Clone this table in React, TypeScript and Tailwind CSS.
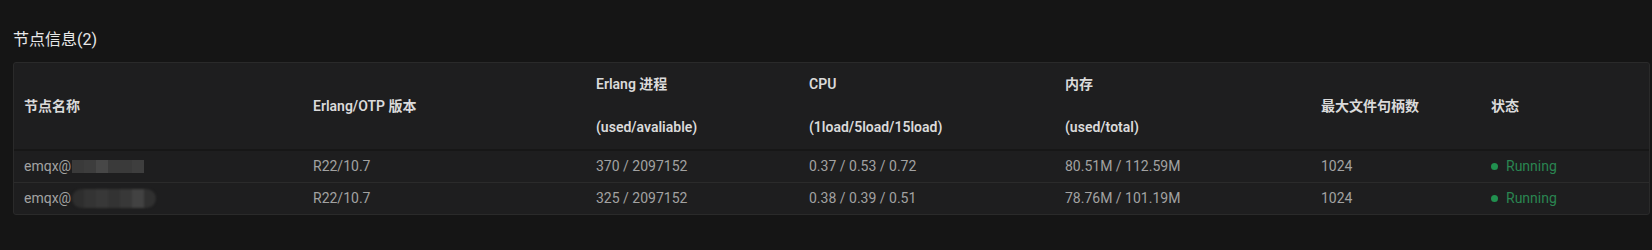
import React from "react"

type Node = {
	host: number[]
	round: boolean
	version: string
	procs: string
	cpu: string
	mem: string
	maxFds: string
}

const nodes: Node[] = [
	{
		host: [0x3a, 0x3d, 0x47, 0x3a, 0x3a, 0x3e],
		round: false,
		version: "R22/10.7",
		procs: "370 / 2097152",
		cpu: "0.37 / 0.53 / 0.72",
		mem: "80.51M / 112.59M",
		maxFds: "1024",
	},
	{
		host: [0x2e, 0x34, 0x38, 0x33, 0x38, 0x42, 0x30],
		round: true,
		version: "R22/10.7",
		procs: "325 / 2097152",
		cpu: "0.38 / 0.39 / 0.51",
		mem: "78.76M / 101.19M",
		maxFds: "1024",
	},
]

const cols = "grid grid-cols-[289px_283px_213px_256px_256px_170px_1fr]"

function Masked({ host, round }: { host: number[]; round: boolean }) {
	return (
		<span
			className={
				round
					? "ml-[1px] inline-flex h-[19px] overflow-hidden rounded-full blur-[1px]"
					: "ml-[1px] inline-flex h-[13px] overflow-hidden"
			}
		>
			{host.map((g, i) => (
				<span
					key={i}
					className="h-full w-[12px]"
					style={{ backgroundColor: `rgb(${g},${g},${g})` }}
				/>
			))}
		</span>
	)
}

function HeadCell({ top, bottom }: { top: string; bottom?: string }) {
	return (
		<div className="flex flex-col justify-center pl-[10px] font-semibold text-[14px] text-[#dadada]">
			<span className="leading-[43px]">{top}</span>
			{bottom && <span className="leading-[43px]">{bottom}</span>}
		</div>
	)
}

export default function App() {
	return (
		<div
			className="min-h-[250px] bg-[#151515] pt-[28px] pb-[35px]"
			style={{ fontFamily: "Roboto, 'Noto Sans CJK SC', sans-serif" }}
		>
			<h2 className="ml-[13px] text-[16px] leading-[24px] text-[#e8e8e8]">节点信息(2)</h2>
			<div className="mt-[10px] ml-[13px] mr-[2px] rounded-[3px] border border-[#2a2a2a] bg-[#1e1e1f]">
				<div className={`${cols} h-[88px] border-b-2 border-[#171717]`}>
					<HeadCell top="节点名称" />
					<HeadCell top="Erlang/OTP 版本" />
					<HeadCell top="Erlang 进程" bottom="(used/avaliable)" />
					<HeadCell top="CPU" bottom="(1load/5load/15load)" />
					<HeadCell top="内存" bottom="(used/total)" />
					<HeadCell top="最大文件句柄数" />
					<HeadCell top="状态" />
				</div>
				{nodes.map((n, i) => (
					<div
						key={i}
						className={`${cols} h-[31px] items-center text-[14px] text-[#a2a2a2] ${
							i < nodes.length - 1 ? "box-content border-b border-[#2b2b2b]" : ""
						}`}
					>
						<div className="flex items-center pl-[10px]">
							<span>emqx@</span>
							<Masked host={n.host} round={n.round} />
						</div>
						<div className="pl-[10px]">{n.version}</div>
						<div className="pl-[10px]">{n.procs}</div>
						<div className="pl-[10px]">{n.cpu}</div>
						<div className="pl-[10px]">{n.mem}</div>
						<div className="pl-[10px]">{n.maxFds}</div>
						<div className="flex items-center gap-[8px] pl-[10px] text-[#2a8551]">
							<span className="h-[7px] w-[7px] rounded-full bg-[#21904f]" />
							Running
						</div>
					</div>
				))}
			</div>
		</div>
	)
}
